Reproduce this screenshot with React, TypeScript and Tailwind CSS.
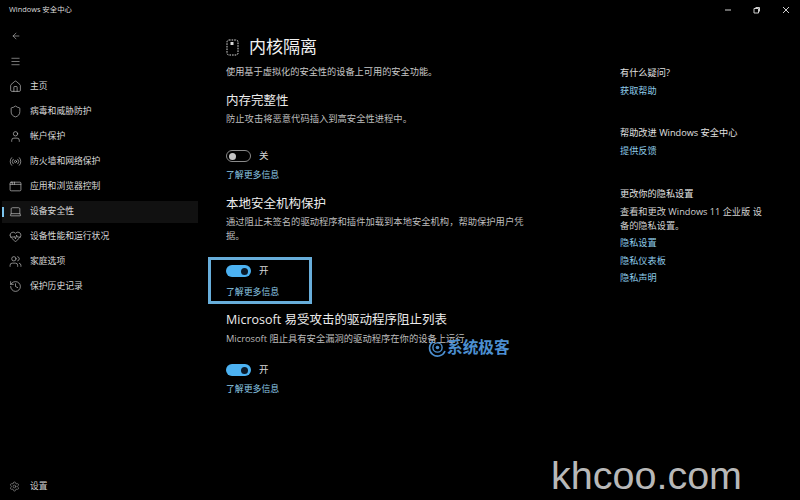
import { ArrowLeft, AppWindow, HeartPulse, History, House, Laptop, Menu, Settings, Shield, User, Users, Radio, type LucideIcon } from "lucide-react";

const navItems: { label: string; icon: LucideIcon; active?: boolean }[] = [
  { label: "主页", icon: House },
  { label: "病毒和威胁防护", icon: Shield },
  { label: "帐户保护", icon: User },
  { label: "防火墙和网络保护", icon: Radio },
  { label: "应用和浏览器控制", icon: AppWindow },
  { label: "设备安全性", icon: Laptop, active: true },
  { label: "设备性能和运行状况", icon: HeartPulse },
  { label: "家庭选项", icon: Users },
  { label: "保护历史记录", icon: History },
];

function Toggle({ on, label }: { on: boolean; label: string }) {
  return (
    <div className="flex items-center h-[12px]">
      {on ? (
        <div className="w-[25px] h-[12px] rounded-full bg-[#4cb2f2] flex items-center justify-end pr-[3px]">
          <div className="w-[7px] h-[7px] rounded-full bg-[#0a1a2a]" />
        </div>
      ) : (
        <div className="w-[25px] h-[12px] rounded-full border border-[#8a8a8a] flex items-center pl-[2px]">
          <div className="w-[7px] h-[7px] rounded-full bg-[#c4c4c4]" />
        </div>
      )}
      <span className="ml-[8px] text-[9.5px] text-[#d8d8d8] leading-[12px]">{label}</span>
    </div>
  );
}

function LearnMore() {
  return <div className="text-[8.9px] leading-[14px] text-[#8ecbe8]">了解更多信息</div>;
}

export default function App() {
  return (
    <div className="relative w-[800px] h-[500px] overflow-hidden bg-black text-white font-['Open_Sans','Noto_Sans_CJK_SC',sans-serif]">
      <div className="flex items-center justify-between h-[20px]">
        <span className="ml-[9px] text-[7.4px] text-[#dddddd]">Windows 安全中心</span>
        <div className="flex items-center gap-[21px] mr-[10px] text-[#cfcfcf]">
          <svg width="8" height="8" viewBox="0 0 8 8" fill="none" stroke="currentColor"><path d="M1 4h6" /></svg>
          <svg width="8" height="8" viewBox="0 0 8 8" fill="none" stroke="currentColor"><path d="M2.5 1.5h4v4M1 2.5h4.5v4.5H1z" /></svg>
          <svg width="8" height="8" viewBox="0 0 8 8" fill="none" stroke="currentColor"><path d="M1 1l6 6M7 1L1 7" /></svg>
        </div>
      </div>

      <div className="flex h-[480px]">
        <aside className="w-[198px] shrink-0 flex flex-col">
          <div className="h-[30px] flex items-center pl-[11px] mt-[1px]">
            <ArrowLeft size={10} strokeWidth={1.4} className="text-[#c8c8c8]" />
          </div>
          <div className="h-[20px] flex items-center pl-[10px]">
            <Menu size={11} strokeWidth={1.3} className="text-[#c8c8c8]" />
          </div>
          <nav className="flex flex-col mt-[3px]">
            {navItems.map((item) => {
              const Icon = item.icon;
              return (
                <div
                  key={item.label}
                  className={`relative ml-[2px] flex items-center text-[8.8px] text-[#d8d8d8] ${item.active ? "h-[22px] my-[1.5px] bg-[#111111]" : "h-[25px]"}`}
                >
                  {item.active && <div className="absolute left-0 top-[6px] w-[2px] h-[10px] bg-[#7cc4ee]" />}
                  <Icon size={13} strokeWidth={1.2} className="ml-[7px] text-[#cccccc]" />
                  <span className="ml-[8px]">{item.label}</span>
                </div>
              );
            })}
          </nav>
          <div className="mt-auto mb-[7px] flex items-center ml-[9px] text-[8.8px] text-[#d0d0d0]">
            <Settings size={11} strokeWidth={1.2} className="text-[#a8a8a8]" />
            <span className="ml-[10px]">设置</span>
          </div>
        </aside>

        <main className="w-[394px] shrink-0 pl-[28px] pr-[60px]">
          <div className="flex items-center mt-[15px] h-[24px]">
            <svg width="13" height="17" viewBox="0 0 13 17" fill="none" stroke="#d8d8d8" strokeWidth="1" strokeDasharray="1.6 1">
              <rect x="1" y="1" width="11" height="15" rx="2" />
              <rect x="4.5" y="3" width="3" height="3" fill="#d8d8d8" stroke="none" />
            </svg>
            <h1 className="ml-[10px] text-[17px] leading-[24px] text-[#f2f2f2]">内核隔离</h1>
          </div>
          <p className="mt-[6px] text-[9.2px] leading-[14px] text-[#c8c8c8]">使用基于虚拟化的安全性的设备上可用的安全功能。</p>

          <h2 className="mt-[13px] text-[12.5px] leading-[18px] text-[#ececec]">内存完整性</h2>
          <p className="mt-[2px] text-[9.3px] leading-[14px] text-[#bdbdbd]">防止攻击将恶意代码插入到高安全性进程中。</p>
          <div className="mt-[24px]"><Toggle on={false} label="关" /></div>
          <div className="mt-[6px]"><LearnMore /></div>

          <h2 className="mt-[13px] text-[12.5px] leading-[18px] text-[#ececec]">本地安全机构保护</h2>
          <p className="mt-[2px] text-[9.3px] leading-[13.5px] text-[#bdbdbd] -mr-[6px]">通过阻止未签名的驱动程序和插件加载到本地安全机构，帮助保护用户凭据。</p>
          <div className="mt-[23px]"><Toggle on label="开" /></div>
          <div className="mt-[8px]"><LearnMore /></div>

          <h2 className="mt-[12px] text-[12.5px] leading-[18px] text-[#ececec] whitespace-nowrap">Microsoft 易受攻击的驱动程序阻止列表</h2>
          <p className="mt-[3px] text-[9.3px] leading-[14px] text-[#bdbdbd] whitespace-nowrap">Microsoft 阻止具有安全漏洞的驱动程序在你的设备上运行</p>
          <div className="mt-[18px]"><Toggle on label="开" /></div>
          <div className="mt-[6px]"><LearnMore /></div>
        </main>

        <aside className="w-[150px] ml-[28px] pt-[46px] text-[9.2px] leading-[14px]">
          <div className="text-[#e0e0e0]">有什么疑问?</div>
          <div className="mt-[4px] text-[#8ecbe8]">获取帮助</div>
          <div className="mt-[28px] text-[#e0e0e0]">帮助改进 Windows 安全中心</div>
          <div className="mt-[4px] text-[#8ecbe8]">提供反馈</div>
          <div className="mt-[29px] text-[#e0e0e0]">更改你的隐私设置</div>
          <div className="mt-[4px] w-[150px] leading-[13.5px] text-[#d0d0d0]">查看和更改 Windows 11 企业版 设备的隐私设置。</div>
          <div className="mt-[4px] text-[#8ecbe8]">隐私设置</div>
          <div className="mt-[4px] text-[#8ecbe8]">隐私仪表板</div>
          <div className="mt-[3px] text-[#8ecbe8]">隐私声明</div>
        </aside>
      </div>

      <div className="absolute left-[208px] top-[257px] w-[104px] h-[47px] border-[3px] border-[#68aedb]" />

      <div className="absolute left-[428px] top-[337px] flex items-center h-[20px]">
        <svg width="19" height="19" viewBox="0 0 19 19" fill="none" stroke="#4c8fd0">
          <path d="M5 3.5A8 8 0 1 0 17 13" strokeWidth="1.6" />
          <circle cx="9.5" cy="9.5" r="4.6" strokeWidth="1.4" />
          <circle cx="9.5" cy="9.5" r="1.8" fill="#4c8fd0" stroke="none" />
        </svg>
        <span className="text-[15.7px] font-bold leading-[20px] text-[#4c8fd0] whitespace-nowrap">系统极客</span>
      </div>

      <div className="absolute left-[551px] top-[452px] text-[39.5px] leading-[46px] text-[#b8b8b8] font-['Liberation_Sans',sans-serif]">khcoo.com</div>
    </div>
  );
}
